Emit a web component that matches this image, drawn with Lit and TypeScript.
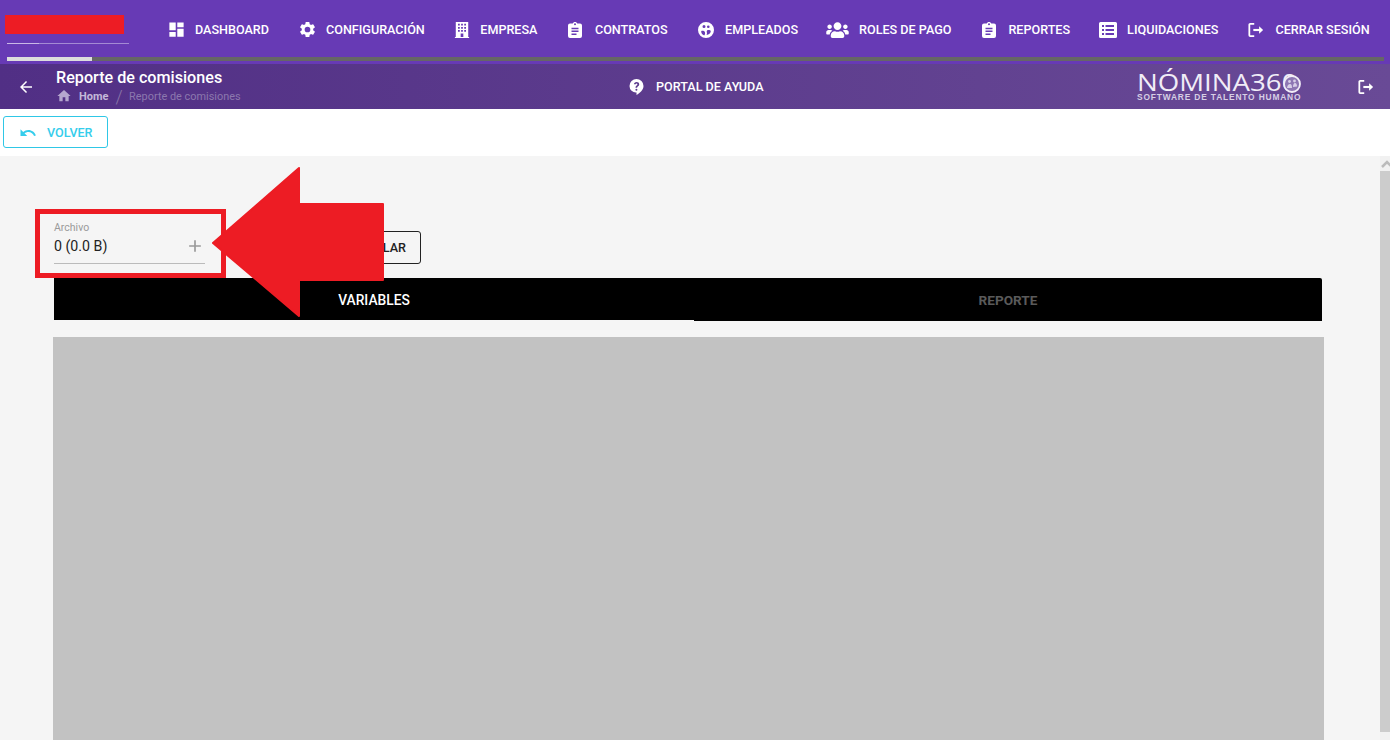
import { LitElement, html, css, svg } from "lit";
import { customElement } from "lit/decorators.js";

const mat = (d: any, cls = "ic") => html`<svg class=${cls} viewBox="0 0 24 24" fill="currentColor">${svg`<path d=${d}></path>`}</svg>`;

const clipboard = html`<svg class="ic clip" viewBox="0 0 14 16" fill="currentColor"><path fill-rule="evenodd" d="M2 1.500h2.700C5 .6 5.900 0 7 0s2 .6 2.300 1.500H12a2 2 0 0 1 2 2V14a2 2 0 0 1-2 2H2a2 2 0 0 1-2-2V3.500a2 2 0 0 1 2-2zM7 1.200a1 1 0 1 0 0 2 1 1 0 0 0 0-2zM3.500 5.800v1.500h7V5.800zM3.500 8.600v1.500h7V8.600zM3.500 11.400v1.500h5v-1.500z"></path></svg>`;
const logout = html`<svg class="ic" viewBox="0 0 18 18" fill="none" stroke="currentColor" stroke-width="2"><path d="M7 2H2.500A1 1 0 0 0 1.500 3v12a1 1 0 0 0 1 1H7"></path><path d="M6 9h9" stroke-width="2.400"></path><path d="M12.500 4.800 17 9l-4.500 4.200z" fill="currentColor" stroke="none"></path></svg>`;

// label, icon, gap after the text, gap between icon and text
const items: Array<[string, any, number, number]> = [
  ["DASHBOARD", mat("M3 13h8V3H3v10zm0 8h8v-6H3v6zm10 0h8V11h-8v10zm0-18v6h8V3h-8z", "ic big"), 30, 11],
  ["CONFIGURACIÓN", mat("M19.140 12.940c.04-.3.06-.61.06-.94 0-.32-.02-.64-.07-.94l2.030-1.580a.49.49 0 0 0 .12-.61l-1.920-3.320a.49.49 0 0 0-.59-.22l-2.390.96a7.030 7.030 0 0 0-1.620-.94l-.36-2.540a.48.48 0 0 0-.48-.41h-3.840a.48.48 0 0 0-.47.41l-.36 2.540c-.59.24-1.130.57-1.620.94l-2.390-.96a.48.48 0 0 0-.59.22L2.740 8.870a.48.48 0 0 0 .12.61l2.030 1.580c-.05.3-.09.63-.09.94s.02.64.07.94l-2.030 1.580a.49.49 0 0 0-.12.61l1.920 3.320c.12.22.37.29.59.22l2.390-.96c.5.38 1.030.7 1.620.94l.36 2.540c.05.24.24.41.48.41h3.840c.24 0 .44-.17.47-.41l.36-2.540c.59-.24 1.130-.56 1.620-.94l2.390.96c.22.08.47 0 .59-.22l1.920-3.320a.48.48 0 0 0-.12-.61l-2.010-1.580zM12 15.600A3.610 3.610 0 0 1 8.400 12 3.610 3.610 0 0 1 12 8.400a3.610 3.610 0 0 1 3.600 3.600 3.610 3.610 0 0 1-3.600 3.600z", "ic big"), 29, 11],
  ["EMPRESA", html`<svg class="ic" viewBox="0 0 16 18" fill="currentColor"><path fill-rule="evenodd" d="M1 0h14v17h1v1H0v-1h1zM3.500 2v2h2V2zM7 2v2h2V2zM10.500 2v2h2V2zM3.500 5.500v2h2v-2zM7 5.500v2h2v-2zM10.500 5.500v2h2v-2zM3.500 9v2h2V9zM7 9v2h2V9zM10.500 9v2h2V9zM6.500 13v4h3v-4z"></path></svg>`, 31, 10.5],
  ["CONTRATOS", clipboard, 30, 12.5],
  ["EMPLEADOS", html`<svg class="ic" viewBox="0 0 16 16" fill="currentColor"><path fill-rule="evenodd" d="M8 0a8 8 0 1 1 0 16A8 8 0 0 1 8 0zM6 3a1.500 1.500 0 1 0 0 3 1.500 1.500 0 0 0 0-3zM10.300 3.500a1.300 1.300 0 1 0 0 2.600 1.300 1.300 0 0 0 0-2.600zM3.200 9.300c0 2 1.300 3.700 3 4.200.5-.6.9-1.400.9-2.300 0-1.400-.8-2.500-1.900-2.500s-2 .1-2 .6zM9.300 8.200c-.6.500-.7 1.500-.4 2.300.2.700.1 1.400-.3 2.500 2.200 0 4.200-2 4.200-3.900 0-.9-2.500-1.500-3.500-.9z"></path></svg>`, 28, 11.5],
  ["ROLES DE PAGO", html`<svg class="ic wide" viewBox="0 0 640 512" fill="currentColor"><path d="M96 224c35.300 0 64-28.700 64-64s-28.700-64-64-64-64 28.700-64 64 28.700 64 64 64zm448 0c35.300 0 64-28.700 64-64s-28.700-64-64-64-64 28.700-64 64 28.700 64 64 64zm32 32h-64c-17.600 0-33.500 7.100-45.100 18.600 40.300 22.100 68.900 62 75.100 109.400h66c17.700 0 32-14.300 32-32v-32c0-35.300-28.700-64-64-64zm-256 0c61.900 0 112-50.100 112-112S381.900 32 320 32 208 82.100 208 144s50.100 112 112 112zm76.800 32h-8.300c-20.800 10-43.900 16-68.500 16s-47.600-6-68.500-16h-8.300C179.600 288 128 339.600 128 403.200V432c0 26.500 21.500 48 48 48h288c26.500 0 48-21.500 48-48v-28.800c0-63.600-51.600-115.200-115.200-115.200zm-223.700-13.400C161.500 263.100 145.600 256 128 256H64c-35.300 0-64 28.700-64 64v32c0 17.700 14.300 32 32 32h65.900c6.300-47.400 34.900-87.300 75.200-109.400z"></path></svg>`, 31, 10],
  ["REPORTES", clipboard, 29, 12],
  ["LIQUIDACIONES", html`<svg class="ic list" viewBox="0 0 18 16" fill="currentColor"><path fill-rule="evenodd" d="M1.500 0h15A1.500 1.500 0 0 1 18 1.500v13a1.500 1.500 0 0 1-1.500 1.500h-15A1.500 1.500 0 0 1 0 14.500v-13A1.500 1.500 0 0 1 1.500 0zM3 3v2h2V3zM6.500 3v2H15V3zM3 7v2h2V7zM6.500 7v2H15V7zM3 11v2h2v-2zM6.500 11v2H15v-2z"></path></svg>`, 30, 10],
  ["CERRAR SESIÓN", logout, 0, 11],
];

@customElement("app-root")
export class AppRoot extends LitElement {
  static styles = css`
    :host { display: block; position: relative; width: 1390px; height: 740px; overflow: hidden; font-family: Roboto, "Liberation Sans", sans-serif; background: #fff; }
    * { box-sizing: border-box; }
    .ic { width: 16px; height: 16px; display: block; flex: none; }
    .big { width: 19px; height: 19px; margin: 0 -1.500px; }
    .clip { width: 14px; height: 16px; }
    .wide { width: 23px; height: 18px; }
    .list { width: 18px; height: 16px; }

    .top { height: 64px; background: #673ab5; display: flex; flex-direction: column; position: relative; }
    .toprow { height: 57px; display: flex; }
    .brand { width: 168px; flex: none; padding: 15px 0 0 5px; display: flex; flex-direction: column; }
    .redlogo { width: 119px; height: 19px; background: #ed1c24; }
    .brandline { margin: 9px 0 0 2px; width: 122px; height: 1px; background: linear-gradient(90deg, #c9b8e6 26%, #a48ad4 26%); }
    .nav { display: flex; align-items: center; height: 59px; color: #fff; }
    .nav .item { display: flex; align-items: center; font-size: 12.600px; font-weight: 500; white-space: nowrap; }
    .progress { margin-left: 7px; width: 1377px; height: 4px; background: #666; }
    .progress div { width: 85px; height: 4px; background: #ddd; }

    .sub { height: 45px; background: linear-gradient(90deg, #512f85, #694a96); display: flex; align-items: center; color: #fff; }
    .back { width: 56px; flex: none; display: flex; justify-content: center; padding-right: 4px; }
    .back .ic { width: 18px; height: 18px; }
    .titles { width: 573px; flex: none; }
    .title { font-size: 16.150px; font-weight: 500; line-height: 18px; margin-top: -1px; }
    .crumbs { display: flex; align-items: center; font-size: 11px; height: 15px; margin-top: 2px; }
    .crumbs .ic { width: 16px; height: 16px; color: #b5a6cf; }
    .crumbs .home { color: #c4b9d9; font-weight: 700; margin-left: 7px; }
    .crumbs .slash { color: #8a76a8; font-size: 18px; font-weight: 300; margin: 0 6.500px 0 7px; }
    .crumbs .cur { color: #8c78ae; font-size: 10.900px; }
    .help { width: 508px; flex: none; display: flex; align-items: center; font-size: 12.600px; font-weight: 500; }
    .help .ic { width: 15px; height: 16px; margin-right: 12px; }
    .logo { width: 221px; flex: none; display: flex; flex-direction: column; line-height: 1; color: #f1edf7; padding-top: 1px; }
    .logo .name { position: relative; width: 164px; font-family: "Open Sans", sans-serif; font-size: 23.500px; font-weight: 500; height: 21px; line-height: 21px; white-space: nowrap; }
    .logo .name span { display: inline-block; transform-origin: 0 50%; transform: scaleX(1.175); }
    .logo .name svg { position: absolute; right: 0; top: 3px; width: 18px; height: 18px; }
    .logo .tag { font-family: "Liberation Sans", sans-serif; font-size: 8.400px; font-weight: 700; letter-spacing: .84px; white-space: nowrap; color: #d7cfe5; }
    .sub > .ic { width: 16px; height: 16px; }

    .bar { height: 47px; background: #fff; padding: 7px 0 0 3px; }
    .volver { width: 105px; height: 32px; border: 1px solid #2fc7e6; border-radius: 3px; display: flex; align-items: center; padding: 1px 0 0 15px; color: #35cdec; font-family: inherit; font-size: 12.600px; font-weight: 500; background: #fff; }
    .volver .ic { width: 18px; height: 18px; margin-right: 10px; }

    .page { height: 584px; display: flex; background: #f5f5f5; }
    .content { flex: 1; min-width: 0; padding: 62px 0 0 54px; display: flex; flex-direction: column; }
    .controls { display: flex; height: 60px; }
    .field { width: 151px; height: 46px; border-bottom: 1px solid #bbb; display: flex; flex-direction: column; }
    .field label { font-size: 10.500px; color: #9a9a9a; line-height: 13px; margin-top: 3px; }
    .field .val { display: flex; align-items: center; justify-content: space-between; font-size: 14.200px; color: #222; margin-top: 2px; height: 20px; }
    .field .ic { width: 20px; height: 20px; color: #999; }
    .calc { margin: 13px 0 0 118px; width: 98px; height: 33px; border: 1px solid #222; border-radius: 3px; background: transparent; font: 500 12.600px Roboto, sans-serif; color: #222; display: flex; align-items: center; justify-content: flex-end; padding: 0 14px 0 0; }
    .tabs { display: flex; width: 1268px; height: 43px; background: #000; border-radius: 0 2px 0 0; }
    .wrap { display: flex; flex-direction: column; }
    .tab { font-size: 13.800px; font-weight: 500; display: flex; align-items: center; justify-content: center; }
    .tab.on { width: 640px; color: #fff; height: 42px; padding-top: 2px; }
    .tab.off { width: 628px; height: 43px; color: #5a5a5a; padding-top: 1px; font-weight: 700; font-size: 13.600px; }
    .tabline { width: 640px; height: 1px; background: #f5f5f5; }
    .panel { width: 1271px; height: 403px; margin: 16px 0 0 -1px; background: #c2c2c2; }

    .scroll { width: 10px; flex: none; display: flex; flex-direction: column; background: #f1f1f1; }
    .scroll .up { height: 15px; color: #bbb; overflow: hidden; }
    .scroll .up svg { display: block; width: 12px; height: 10px; margin: 3px 0 0 1px; }
    .scroll .thumb { height: 561px; background: #ccc; }

    .marker { position: absolute; left: 35px; top: 209px; width: 191px; height: 69px; border: 5px solid #ed1c24; }
    .arrow { position: absolute; left: 210px; top: 165px; width: 176px; height: 154px; }
  `;

  render() {
    return html`
      <div class="top">
        <div class="toprow">
          <div class="brand"><div class="redlogo"></div><div class="brandline"></div></div>
          <nav class="nav">
            ${items.map(([label, icon, gap, iconGap]) => html`
              <div class="item" style="margin-right:${gap}px">${icon}<span style="margin-left:${iconGap}px">${label}</span></div>`)}
          </nav>
        </div>
        <div class="progress"><div></div></div>
      </div>
      <div class="sub">
        <div class="back">${mat("M20 11H7.830l5.590-5.590L12 4l-8 8 8 8 1.410-1.410L7.830 13H20v-2z")}</div>
        <div class="titles">
          <div class="title">Reporte de comisiones</div>
          <div class="crumbs">
            ${mat("M10 20v-6h4v6h5v-8h3L12 3 2 12h3v8z")}
            <span class="home">Home</span><span class="slash">/</span><span class="cur">Reporte de comisiones</span>
          </div>
        </div>
        <div class="help">
          <svg class="ic" viewBox="0 0 15 16" fill="currentColor"><path fill-rule="evenodd" d="M7.500 0a7 7 0 0 1 7 7c0 4-3.500 7-7 9v-2.500a6.500 6.500 0 0 1-7-6.500 7 7 0 0 1 7-7zM7.600 3C6 3 5 4 4.900 5.300h1.800c.1-.6.4-.9.9-.9s.8.300.8.800c0 .5-.3.8-.8 1.200-.8.6-1.100 1.100-1.100 2.100v.3h1.700v-.2c0-.5.200-.8.800-1.300.7-.5 1.200-1.100 1.200-2.100C10.200 3.800 9.100 3 7.600 3zM7.400 9.700a1 1 0 1 0 0 2 1 1 0 0 0 0-2z"></path></svg>
          PORTAL DE AYUDA
        </div>
        <div class="logo">
          <div class="name"><span>NÓMINA360</span>
            <svg viewBox="0 0 18 18"><circle cx="9" cy="9" r="8" fill="#8d76b3" stroke="#f1edf7" stroke-width="1.800"></circle><circle cx="6.500" cy="6.500" r="1.400" fill="#d8cfe8"></circle><circle cx="11.500" cy="6" r="1.400" fill="#d8cfe8"></circle><path d="M4 13c.3-2.500 1.500-4 3-4s2 1.500 2 4zM10 12c0-2 .7-4 2-4s2 1.500 2 3.500z" fill="#d8cfe8"></path></svg>
          </div>
          <div class="tag">SOFTWARE DE TALENTO HUMANO</div>
        </div>
        ${logout}
      </div>
      <div class="bar">
        <button class="volver">${mat("M12.500 8c-2.650 0-5.050.99-6.900 2.600L2 7v9h9l-3.620-3.620c1.390-1.160 3.160-1.880 5.120-1.880 3.540 0 6.550 2.310 7.600 5.500l2.370-.78C21.080 11.030 17.150 8 12.500 8z")}VOLVER</button>
      </div>
      <div class="page">
        <div class="content">
          <div class="controls">
            <div class="field">
              <label>Archivo</label>
              <div class="val"><span>0 (0.0 B)</span>${mat("M19 13h-6v6h-2v-6H5v-2h6V5h2v6h6v2z")}</div>
            </div>
            <button class="calc">CALCULAR</button>
          </div>
          <div class="tabs">
            <div class="wrap"><div class="tab on">VARIABLES</div><div class="tabline"></div></div>
            <div class="tab off">REPORTE</div>
          </div>
          <div class="panel"></div>
        </div>
        <div class="scroll">
          <div class="up"><svg viewBox="0 0 12 10" fill="none" stroke="currentColor" stroke-width="2.500"><path d="M1 8l5-5 5 5"></path></svg></div>
          <div class="thumb"></div>
        </div>
      </div>
      <div class="marker"></div>
      <svg class="arrow" viewBox="0 0 176 154" fill="#ed1c24" stroke="#ed1c24" stroke-width="2" stroke-linejoin="round"><path d="M3 78 89 3v36h84v76H89v36z"></path></svg>
    `;
  }
}
